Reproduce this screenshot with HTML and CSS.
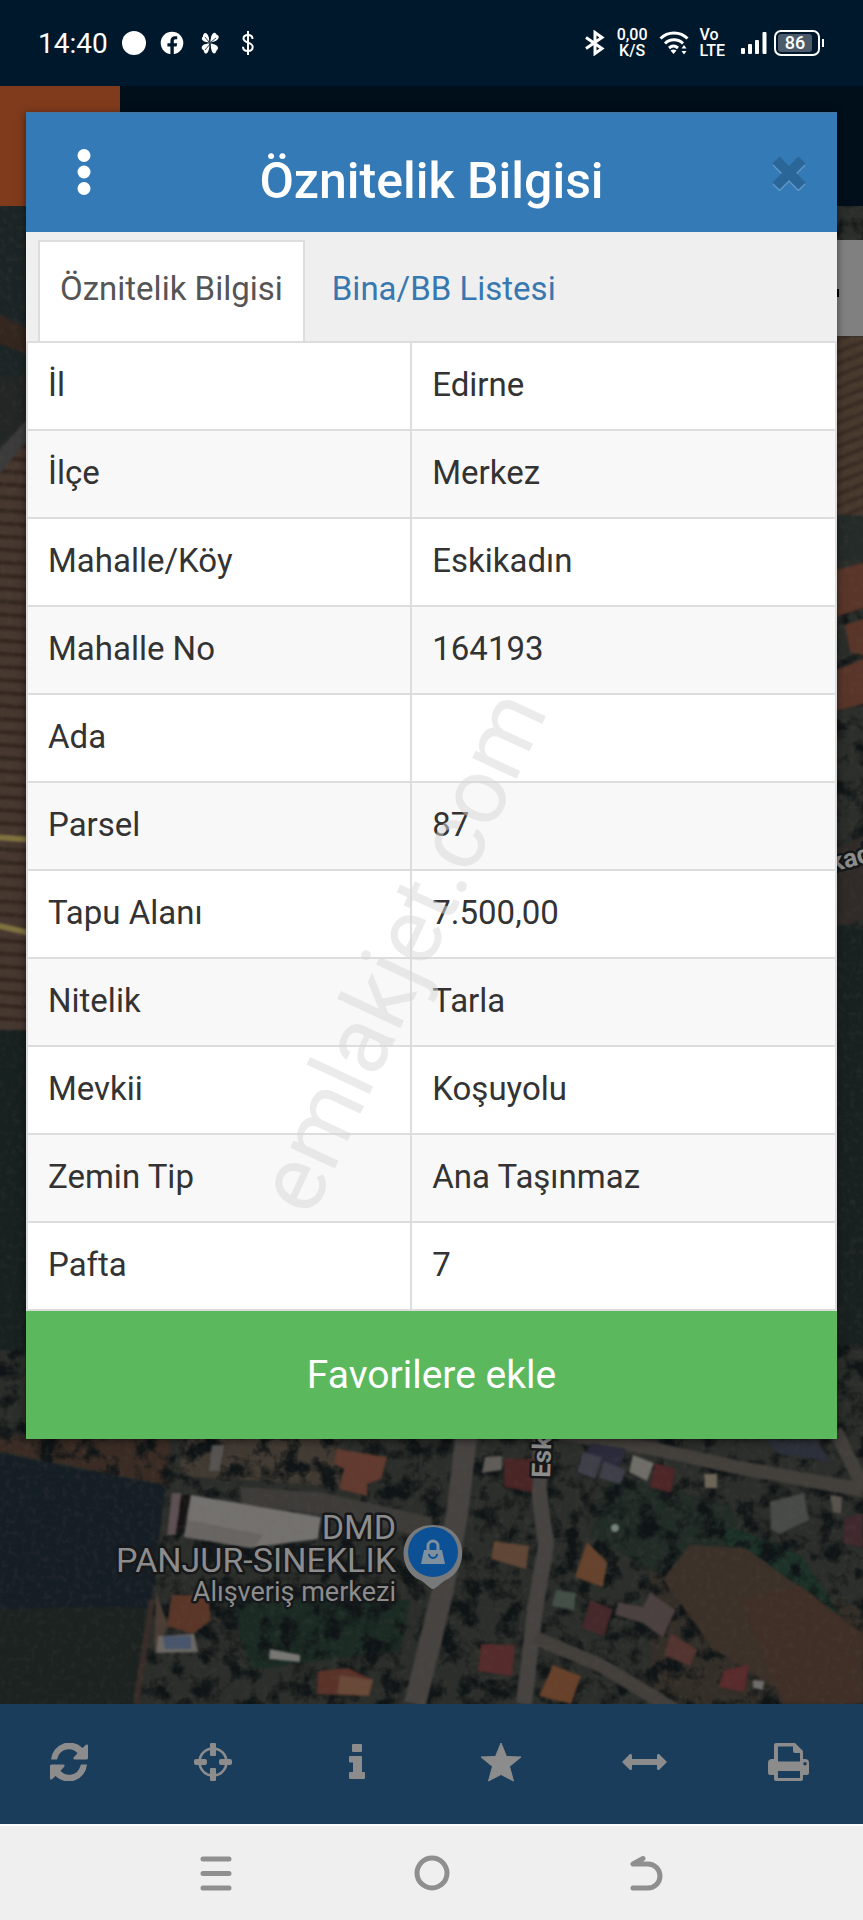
FILE: index.html
```html
<!DOCTYPE html>
<html lang="tr">
<head>
<meta charset="utf-8">
<meta name="viewport" content="width=device-width, initial-scale=1">
<title>Öznitelik Bilgisi</title>
<link rel="stylesheet" href="styles.css">
</head>
<body>
<header class="status">
  <div class="status-left">
    <time>14:40</time>
    <svg width="24" height="24" viewBox="0 0 24 24"><circle cx="12" cy="12" r="12" fill="#fff"/></svg>
    <svg width="24" height="24" viewBox="0 0 24 24"><circle cx="12" cy="12" r="11.3" fill="#fff"/><path d="M10.4 24v-8.500H7.400v-3.200h3v-2.200c0-3.200 1.800-4.800 4.600-4.800h2.200v3h-1.600c-1.300 0-1.800.7-1.800 1.700v2.300h3.400l-.6 3.200h-2.800V24z" fill="#00182b"/></svg>
    <svg width="24" height="24" viewBox="0 0 24 24" fill="#fff"><path d="M11.500 11.500C5 11.500 2 8 5 5.500c0-5 6-6 6.500 6zM12.500 11.500c0-9 4-12 6-8 4 1 3 7-6 8zM11.500 12.500c-8 0-9.500 5-6 6.500 1 6 6 5 6-6.500zM12.500 12.500c8 1 9 5 6 7-1 5-6 4-6-7z"/><path d="M7 6l4 5 1-5M18 7l-5 4M7 19l5-6 1 7" stroke="#00182b" stroke-width=".8" fill="none"/></svg>
    <svg width="24" height="24" viewBox="0 0 24 24" fill="none" stroke="#fff"><path d="M16.500 8c0-3-2-4-4.500-4S7.500 5.300 7.500 7.500c0 4.700 9.200 3.500 9.200 8.300 0 2.700-2 4.200-4.700 4.200-3 0-5-1.500-5-4.200" stroke-width="2"/><path d="M12 0v24" stroke-width="2"/></svg>
  </div>
  <div class="status-right">
    <svg width="22" height="26" viewBox="0 0 22 26" fill="none" stroke="#fff" stroke-width="3"><path d="M2 7.500l16 11-7 5v-21l7 5-16 11"/></svg>
    <div class="tiny tiny-center"><span>0,00</span><span>K/S</span></div>
    <svg width="30" height="24" viewBox="0 0 30 24" fill="none" stroke="#fff" stroke-width="3"><path d="M1.500 7.500c7-7.500 20-7.500 27 0M6 12.500c5-5 13-5 18 0M10 17c3-2.600 6-2.600 9 0"/><path d="M14.500 23l-3-3.500c2-1.500 4-1.500 6 0zM25 14l2.500 3.500h-5zM25 23.500l2.500-3.500h-5z" fill="#fff" stroke="none"/></svg>
    <div class="tiny"><span>Vo</span><span>LTE</span></div>
    <svg class="signal" width="26" height="24" viewBox="0 0 26 24" fill="#fff"><rect y="17" width="4" height="6" rx="1"/><rect x="7" y="13" width="4" height="10" rx="1"/><rect x="14" y="9" width="4" height="14" rx="1"/><rect x="21.500" y="1" width="4" height="22" rx="1"/></svg>
    <div class="battery"><span>86</span></div>
  </div>
</header>

<main class="app">
  <div class="page">
    <div class="page-head"><div class="brand"></div></div>
    <div class="map">
      <svg class="map-svg" viewBox="0 206 863 1498" preserveAspectRatio="xMidYMid slice">
        <defs>
          <filter id="trees" x="0" y="0" width="100%" height="100%" color-interpolation-filters="sRGB"><feTurbulence type="fractalNoise" baseFrequency=".05" numOctaves="4" seed="8"/><feColorMatrix values="0 0 0 0 .06  0 0 0 0 .08  0 0 0 0 .085  4 0 0 0 -1.800"/></filter>
          <filter id="grain" x="0" y="0" width="100%" height="100%" color-interpolation-filters="sRGB"><feTurbulence type="fractalNoise" baseFrequency=".16" numOctaves="3" seed="3"/><feColorMatrix values="0 0 0 0 .4  0 0 0 0 .36  0 0 0 0 .33  2.500 0 0 0 -1.200"/></filter>
          <filter id="soft" color-interpolation-filters="sRGB"><feGaussianBlur stdDeviation="1"/></filter>
          <pattern id="furrow" width="40" height="13" patternUnits="userSpaceOnUse" patternTransform="rotate(4)"><rect width="40" height="13" fill="#46372f"/><rect width="40" height="4" fill="#33271f"/></pattern>
          <pattern id="furrow2" width="40" height="11" patternUnits="userSpaceOnUse" patternTransform="rotate(-22)"><rect width="40" height="11" fill="#48392d"/><rect width="40" height="4" fill="#3a2c24"/></pattern>
        </defs>
        <rect y="206" width="863" height="1498" fill="#2b2e2a"/>
        <g filter="url(#soft)">
          <path d="M-5 1436h175v50L-5 1450z" fill="#3a2c24"/>
          <path d="M180 1436h160v50l-160-10z" fill="#413a32"/>
          <path d="M650 1530l213 80v94H650z" fill="#332e28"/>
          <path d="M610 1475l120 30 20 60-90 10-70-40z" fill="#222c27"/>
          <path d="M740 1530l60 25 40 60-70-20-60-70z" fill="#1c3229"/>
          <path d="M230 1600h180l-10 50-150 20z" fill="#1b2b24"/>
        </g>
        <rect y="206" width="863" height="1498" filter="url(#trees)"/>
        <g filter="url(#soft)">
          <rect x="-5" y="206" width="40" height="170" fill="#1c2526"/>
          <path d="M-5 312l40 20v25l-40-15z" fill="#33261e"/>
          <rect x="-5" y="376" width="40" height="100" fill="#222624"/>
          <path d="M-5 480l40-60v640H-5z" fill="url(#furrow)"/>
          <path d="M-5 455l40-45v20l-40 50z" fill="#3b3b3b"/>
          <rect x="-5" y="1030" width="40" height="320" fill="#172120"/>
          <path d="M-5 837l40 3M-5 925l40 9" stroke="#80733f" stroke-width="6"/>
          <rect x="830" y="336" width="40" height="180" fill="url(#furrow2)"/>
          <rect x="830" y="515" width="40" height="45" fill="#242b29"/>
          <path d="M836 570l30-8v45l-30 10zM845 625l25-8v40l-20-5zM836 670l30-12v45l-30 8z" fill="#593529"/>
          <path d="M830 850l40-15v80l-40 20z" fill="#302b28"/>
          <rect x="830" y="925" width="40" height="420" fill="#192120"/>
          <path d="M-5 1452l170 34-13 110-16 112H-5z" fill="#161e25"/>
          <path d="M-5 1610q80-5 155-2l-14 100H-5z" fill="#1b2220"/>
          <path d="M152 1600l-16 104" stroke="#382d28" stroke-width="6"/>
          <path d="M240 1487l80 5 112 25v22l-100-23-90-12z" fill="#3e3c39"/>
          <path d="M467 1430l-10 85-14 75-28 114" fill="none" stroke="#464341" stroke-width="22"/>
          <path d="M541 1430l-2 60 7 55-11 65-11 94" fill="none" stroke="#464341" stroke-width="16"/>
          <path d="M560 1433l90 15 90 20 123 22M535 1638l65 27 75 45M835 1430l30 60" fill="none" stroke="#433f3b" stroke-width="14"/>
          <path d="M690 1545l55 3 118 85v71h-60l-90-55-50-70z" fill="#3c3129"/>
          <path d="M740 1600l60-15 63 50v68h-80z" fill="#3f2f27"/>
          <path d="M191 1495l130 22-3 22-68 9-66-11z" fill="#74726f"/>
          <path d="M188 1520l75 15-10 13-68-11z" fill="#686563"/>
          <path d="M172 1493h9l-5 42h-9z" fill="#5e5054"/><path d="M182 1495h8l-8 38h-6z" fill="#171314"/>
          <path d="M212 1445h13l-6 26h-10z" fill="#565452"/>
          <path d="M337 1449l50 8-6 22-14 5v12l-28-7 5-20-10-5z" fill="#623a2f"/>
          <path d="M172 1595h36l3 25-18 14-26-8z" fill="#5a3628"/>
          <path d="M156 1590l12 36-14 28z" fill="#4a3d35"/>
          <path d="M158 1636l36-2 4 18-42 1z" fill="#6b6864"/><path d="M163 1636h28v13h-26z" fill="#48556c"/>
          <path d="M270 1649l30 6v7l-31-3z" fill="#797875"/>
          <path d="M318 1671l30-3 25 12-4 16-52-2z" fill="#5a3228"/><path d="M340 1675l33 5-4 16-32-2z" fill="#694938"/>
          <path d="M485 1457l17-1v14l-20 3z" fill="#5f5c59"/>
          <path d="M504 1459h30l-2 33-28-5z" fill="#4a2525"/>
          <path d="M590 1443l37 6-8 18-35-5z" fill="#2a2a3a"/><path d="M583 1452l19 5-7 22-18-7zM604 1461l22 9-6 14-21-6z" fill="#3f3f4a"/>
          <path d="M633 1455l21 8-7 18-18-9z" fill="#706e68"/><path d="M655 1463l20 6-4 24-21-6z" fill="#4e2628"/>
          <path d="M704 1474h13v14h-12z" fill="#6d6657"/>
          <path d="M770 1502l34-9 5 27-30 14-8-5z" fill="#474b48"/>
          <path d="M766 1440h50l15 22-52-8z" fill="#2c303a"/>
          <path d="M494 1541l35 5-3 23-35-10z" fill="#604636"/>
          <path d="M587 1542l20 20-4 25-28-10z" fill="#66432d"/>
          <path d="M556 1590l20 3-2 17-22-4z" fill="#425048"/>
          <path d="M590 1600l23 9-9 27-22-8z" fill="#45282a"/>
          <path d="M618 1602l25 5 7-15 25 18-12 28-20-15-28-8z" fill="#4a4140"/>
          <path d="M671 1633l26 17-7 16-26-11z" fill="#533431"/>
          <path d="M481 1644l34 1-3 31-34-5z" fill="#562b2c"/>
          <path d="M553 1665l28 11-10 28-32-8z" fill="#68412b"/>
          <path d="M724 1670l25-5-5 27-25-5z" fill="#5a2b2c"/><path d="M753 1680l11 1-1 9-10-2z" fill="#6f6d6b"/>
          <circle cx="615" cy="1528" r="4" fill="#75837d"/>
          <path d="M845 1518l18-5v35l-20-5z" fill="#3f292d"/>
          <path d="M830 1495l12 2-1 17-8-2z" fill="#59534e"/>
        </g>
        <rect y="206" width="863" height="1498" filter="url(#grain)" opacity=".14"/>
        <g class="map-text">
          <text class="street" transform="translate(550 1478) rotate(-88)">Esk</text>
          <text class="street" transform="translate(832 872) rotate(-15)">kad</text>
          <text class="place" x="396" y="1539">DMD</text>
          <text class="place" x="396" y="1572">PANJUR-SINEKLIK</text>
          <text class="kind" x="396" y="1601">Alışveriş merkezi</text>
        </g>
        <path d="M433 1525c36 0 37 45 13 55-6 3-10 9-13 9s-7-6-13-9c-24-10-23-55 13-55z" fill="#77797b"/>
        <circle cx="433" cy="1552" r="25" fill="#0c5196"/>
        <path d="M424 1550h18l3 14h-24z" fill="#7e8f9e"/><path d="M428 1550v-4a5 5 0 0 1 10 0v4" fill="none" stroke="#7e8f9e" stroke-width="3"/><path d="M429 1554a4 4 0 0 0 8 0" fill="none" stroke="#0c5196" stroke-width="2"/>
        <rect x="823" y="240" width="40" height="96" fill="#808080"/><rect x="834" y="289" width="5" height="8" fill="#000"/>
      </svg>
    </div>
    <nav class="toolbar" aria-label="Harita araçları">
      <button aria-label="Yenile"><svg width="38" height="38" viewBox="0 0 38 38"><path id="arc" d="M1 16.500A18.500 18.500 0 0 1 32.500 5l3.500-3.200q2-.8 2 1V15q0 1.500-1.500 1.500H25q-2.500-.3-1.200-2.200l3.700-4.100A11.500 11.500 0 0 0 7.800 14.500L7 16.500z"/><use href="#arc" transform="rotate(180 19 19)"/></svg></button>
      <button aria-label="Konum"><svg width="38" height="38" viewBox="0 0 38 38"><circle cx="19" cy="19" r="13.500" fill="none" stroke="#8c8c8c" stroke-width="2.600"/><rect x="16" width="6" height="13" rx="1"/><rect x="16" y="25" width="6" height="13" rx="1"/><rect y="16" width="13" height="6" rx="2"/><rect x="25" y="16" width="13" height="6" rx="2"/></svg></button>
      <button aria-label="Bilgi"><svg width="18" height="38" viewBox="0 0 18 38"><rect x="4" y="1" width="10" height="8" rx="1"/><path d="M2 13h11q1 0 1 1v15h2q1 0 1 1v5q0 1-1 1H2q-1 0-1-1v-5q0-1 1-1h3v-9.500H2q-1 0-1-1V14q0-1 1-1z"/></svg></button>
      <button aria-label="Favoriler"><svg width="42" height="40" viewBox="0 0 42 40"><path d="M21 1l5.500 13.500 14.500.5-11.500 9.500L33.500 39 21 32.500 8.500 39l4-14.500L1 15l14.500-.5z" stroke="#8c8c8c" stroke-linejoin="round"/></svg></button>
      <button aria-label="Ölç"><svg width="45" height="18" viewBox="0 0 45 18"><path d="M0 9l8-8q2-.5 2 1.500V6h25V2.500q0-2 2-1.500l8 8-8 8q-2 .5-2-1.500V12H10v3.500q0 2-2 1.500z"/></svg></button>
      <button aria-label="Yazdır"><svg width="42" height="38" viewBox="0 0 42 38"><path fill-rule="evenodd" d="M6 2q0-2 2-2h19l8 8v8h2q4 0 4 4v10q0 2-2 2h-4v4q0 2-2 2H8q-2 0-2-2v-4H2q-2 0-2-2V20q0-4 4-4h2zM10 3.500v15h22V10h-5q-2 0-2-2V3.500zM10 28v7h22v-7zM37 19a1.800 1.800 0 1 0 0 3.600 1.800 1.800 0 0 0 0-3.600z"/></svg></button>
    </nav>
  </div>

  <section class="modal" role="dialog" aria-labelledby="title">
    <div class="modal-head">
      <button class="menu" aria-label="Menü"><svg width="14" height="48" viewBox="0 0 14 48" fill="#fff"><circle cx="7" cy="6.500" r="6.500"/><circle cx="7" cy="23" r="6.500"/><circle cx="7" cy="39.500" r="6.500"/></svg></button>
      <h1 id="title">Öznitelik Bilgisi</h1>
      <button class="close" aria-label="Kapat"><svg width="34" height="36" viewBox="0 0 34 36" stroke-width="10"><path d="M4 7l26 26M30 7L4 33" stroke="#5f97c8"/><path d="M4 5l26 26M30 5L4 31" stroke="#2b6699"/></svg></button>
    </div>
    <div class="tabs" role="tablist">
      <button class="tab tab-active" role="tab" aria-selected="true">Öznitelik Bilgisi</button>
      <button class="tab" role="tab" aria-selected="false">Bina/BB Listesi</button>
    </div>
    <table class="attributes">
      <tbody>
        <tr><th scope="row">İl</th><td>Edirne</td></tr>
        <tr><th scope="row">İlçe</th><td>Merkez</td></tr>
        <tr><th scope="row">Mahalle/Köy</th><td>Eskikadın</td></tr>
        <tr><th scope="row">Mahalle No</th><td>164193</td></tr>
        <tr><th scope="row">Ada</th><td></td></tr>
        <tr><th scope="row">Parsel</th><td>87</td></tr>
        <tr><th scope="row">Tapu Alanı</th><td>7.500,00</td></tr>
        <tr><th scope="row">Nitelik</th><td>Tarla</td></tr>
        <tr><th scope="row">Mevkii</th><td>Koşuyolu</td></tr>
        <tr><th scope="row">Zemin Tip</th><td>Ana Taşınmaz</td></tr>
        <tr><th scope="row">Pafta</th><td>7</td></tr>
      </tbody>
    </table>
    <button class="favorite">Favorilere ekle</button>
  </section>
</main>

<nav class="system-nav" aria-label="Sistem">
  <button aria-label="Son uygulamalar"><svg width="34" height="36" viewBox="0 0 34 36"><path d="M4 4h26M4 18.500h26M4 33h26"/></svg></button>
  <button aria-label="Ana ekran"><svg width="36" height="36" viewBox="0 0 36 36"><circle cx="18" cy="18" r="15"/></svg></button>
  <button aria-label="Geri"><svg width="34" height="36" viewBox="0 0 34 36"><path d="M13 3.500L3 9h15a12 12 0 0 1 0 24H3"/></svg></button>
</nav>
<div class="watermark"><span>emlakjet.com</span></div>
</body>
</html>
```
FILE: styles.css
```css
* { box-sizing: border-box; }

body {
  margin: 0;
  min-height: 100vh;
  position: relative;
  display: flex;
  flex-direction: column;
  overflow-x: hidden;
  font-family: Roboto, "Noto Sans", sans-serif;
  color: #333;
}

button {
  margin: 0;
  padding: 0;
  border: 0;
  background: none;
  font: inherit;
  color: inherit;
}

svg { display: block; }

.status {
  height: 86px;
  padding: 0 38px;
  display: flex;
  align-items: center;
  justify-content: space-between;
  background: #00182b;
  color: #fff;
}

.status-left { display: flex; align-items: center; gap: 14px; }
.status-left time { font-size: 28px; }
.status-right { display: flex; align-items: center; gap: 11px; }

.tiny {
  display: flex;
  flex-direction: column;
  font-size: 16px;
  line-height: 16px;
  font-weight: 500;
}
.tiny-center { align-items: center; }
.signal { margin-left: 5px; }

.battery {
  position: relative;
  width: 46px;
  height: 26px;
  margin-right: 5px;
  margin-left: -4px;
  padding: 2px;
  border: 2px solid #fff;
  border-radius: 7px;
}
.battery::after {
  content: "";
  position: absolute;
  top: 7px;
  right: -6px;
  width: 2px;
  height: 8px;
  background: #fff;
}
.battery span {
  display: block;
  margin-right: 4px;
  border-radius: 3px;
  background: #4b5b6a;
  font-size: 18px;
  line-height: 18px;
  font-weight: 500;
  text-align: center;
}

.app { flex: 1; display: grid; }
.page, .modal { grid-area: 1 / 1; }
.page { display: flex; flex-direction: column; min-width: 0; }
.page-head { height: 120px; background: #000f1a; }
.brand { width: 120px; height: 100%; background: #7f3b1c; }

.map { position: relative; flex: 1; overflow: hidden; background: #262c29; }
.map-svg { position: absolute; inset: 0; width: 100%; height: 100%; }
.map-text { fill: #8c8c8c; stroke: #16181a; stroke-width: 5px; stroke-linejoin: round; paint-order: stroke; }
.street { font-size: 26px; font-weight: 700; }
.place { font-size: 34px; text-anchor: end; }
.kind { font-size: 27px; text-anchor: end; }

.toolbar {
  height: 120px;
  padding-bottom: 4px;
  display: grid;
  grid-template-columns: repeat(6, 1fr);
  background: #1a3d5c;
}
.toolbar button { display: grid; place-items: center; padding-right: 5px; }
.toolbar svg { fill: #8c8c8c; }

.modal {
  z-index: 1;
  align-self: start;
  min-width: 0;
  margin: 26px 26px 265px;
  background: #fff;
  box-shadow: 0 2px 8px rgba(0, 0, 0, .5);
}

.modal-head {
  height: 120px;
  padding: 0 31px 0 51px;
  display: grid;
  grid-template-columns: 34px 1fr 34px;
  align-items: center;
  border-top: 1px solid #4a75a0;
  background: #347ab7;
}
.modal-head h1 {
  margin: 0;
  padding: 16px 20px 0 0;
  color: #fff;
  font-size: 50px;
  line-height: 56px;
  font-weight: 500;
  text-align: center;
}

.tabs {
  display: flex;
  gap: 5px;
  padding: 8px 12px 0;
  background: #efefef;
}
.tab {
  padding: 25px 20px 30px;
  border: 2px solid transparent;
  border-bottom: 0;
  font-size: 33px;
  line-height: 44px;
  color: #3878b0;
}
.tab-active { border-color: #ddd; background: #fff; color: #555; }

.attributes {
  width: 100%;
  border-collapse: collapse;
  border: 2px solid #ddd;
  font-size: 33px;
  line-height: 44px;
}
.attributes th, .attributes td {
  height: 88px;
  padding: 20px 20px 22px;
  border: 2px solid #ddd;
  font-weight: 400;
  text-align: left;
}
.attributes th { width: 47.500%; }
.attributes tr:nth-child(even) { background: #f8f8f8; }

.favorite {
  display: block;
  width: 100%;
  padding: 42px 20px;
  background: #5cb85c;
  color: #fff;
  font-size: 39px;
  line-height: 44px;
}

.system-nav {
  height: 96px;
  padding: 0 12.500%;
  display: grid;
  grid-template-columns: repeat(3, 1fr);
  border-top: 2px solid #fcfcfc;
  background: #efefef;
}
.system-nav button { display: grid; place-items: center; }
.system-nav svg { fill: none; stroke: #8f8f8f; stroke-width: 5; stroke-linecap: round; stroke-linejoin: round; }

.watermark {
  position: absolute;
  inset: 0;
  z-index: 2;
  padding: 0 60px 18px 0;
  display: grid;
  place-items: center;
  pointer-events: none;
  font-size: 93px;
  color: #d8d8d8;
  opacity: .5;
}
.watermark span { transform: rotate(-65deg); }
```
